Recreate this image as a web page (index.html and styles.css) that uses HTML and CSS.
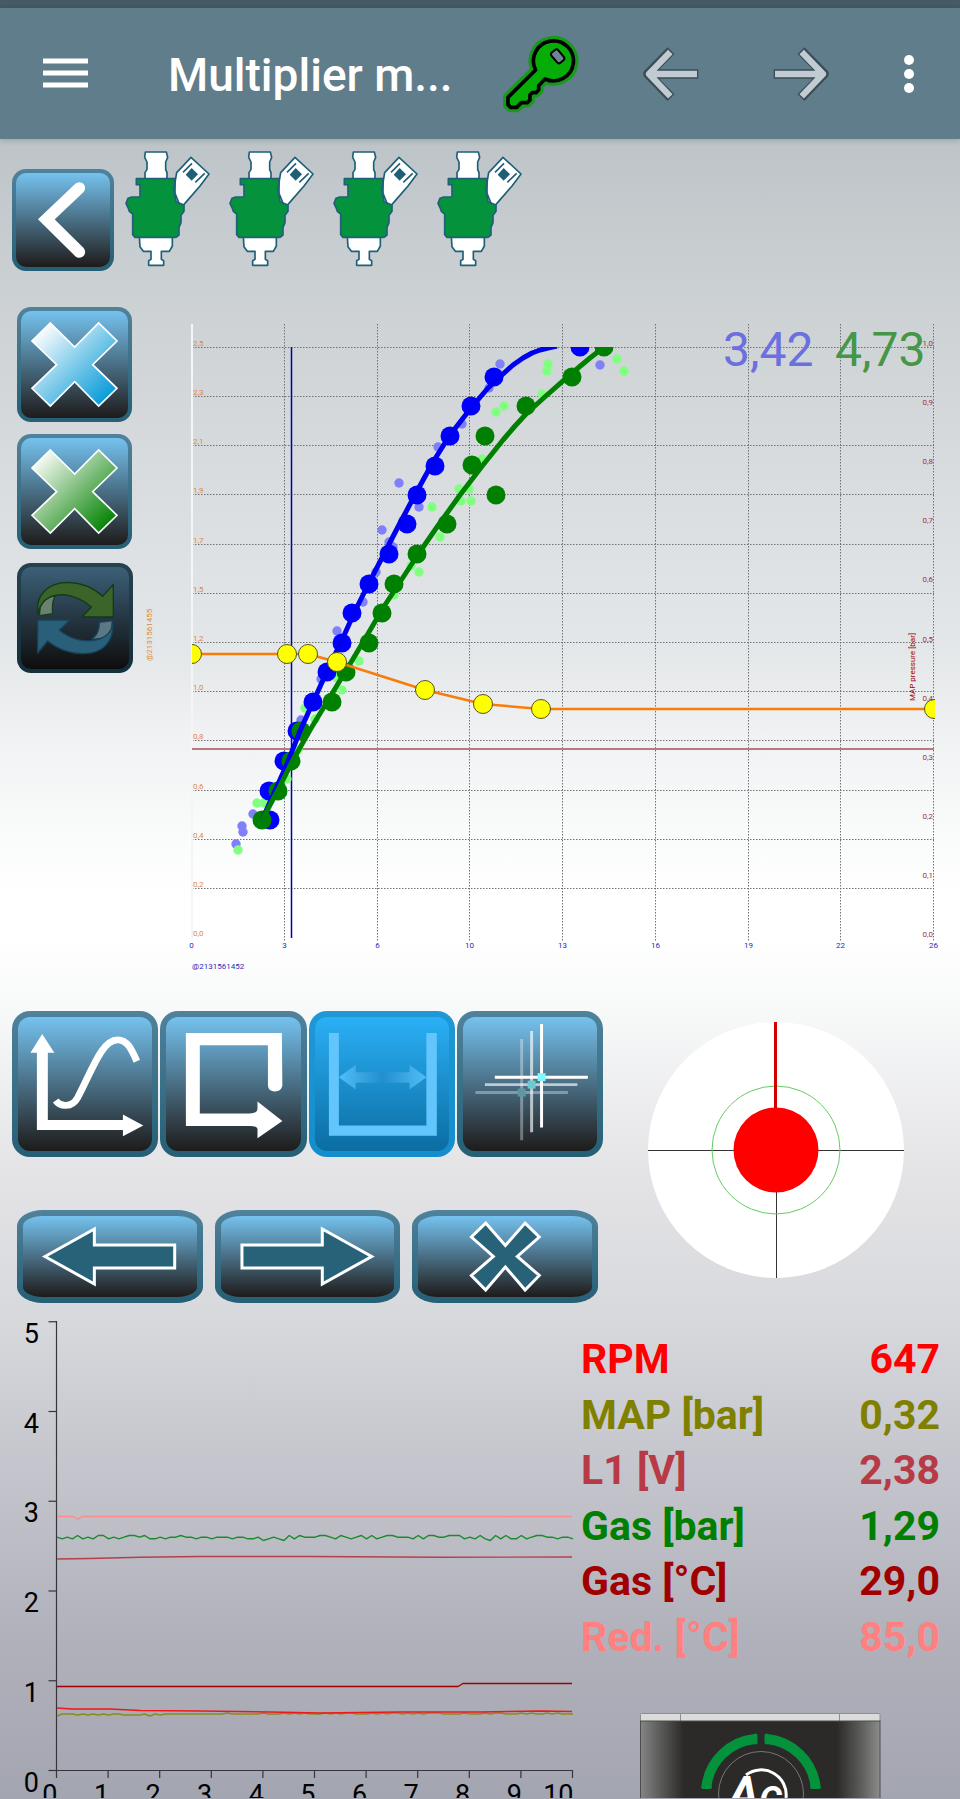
FILE: index.html
```html
<!DOCTYPE html>
<html lang="en">
<head>
<meta charset="utf-8">
<meta name="viewport" content="width=device-width, initial-scale=1">
<title>Multiplier map</title>
<link rel="stylesheet" href="styles.css">
</head>
<body>
<div class="status-bar"></div>
<header class="app-bar">
  <button class="bar-btn menu" aria-label="Menu">
    <svg viewBox="0 0 45 32" width="45" height="32"><path d="M0 3H45M0 15H45M0 27H45" stroke="#fff" stroke-width="5"/></svg>
  </button>
  <h1 class="title">Multiplier m...</h1>
  <button class="bar-btn key" aria-label="Key">
    <svg viewBox="30 40 240 240" width="80" height="80">
      <g stroke-linejoin="round">
        <path d="M137 148L54 230V252L62 260H80L94 246H112L120 238V222L127 216H138L146 208V195L165 175A60 60 0 1 0 137 148Z" fill="none" stroke="#179a1c" stroke-width="30"/>
        <path d="M137 148L54 230V252L62 260H80L94 246H112L120 238V222L127 216H138L146 208V195L165 175A60 60 0 1 0 137 148Z" fill="#06ad06" stroke="#000" stroke-width="11"/>
        <rect x="190" y="87" width="26" height="40" rx="7" transform="rotate(-40 203 107)" fill="#6f8594" stroke="#000" stroke-width="6"/>
      </g>
    </svg>
  </button>
  <button class="bar-btn prev" aria-label="Previous">
    <svg viewBox="450 70 189 180" width="63" height="60">
      <g fill="none" stroke-linejoin="round">
        <path d="M543 90L474 160L543 231M625 160H487" stroke="#3b4c57" stroke-width="29"/>
        <path d="M541 94L477 160L541 227M621 160H487" stroke="#c0cbd2" stroke-width="19"/>
      </g>
    </svg>
  </button>
  <button class="bar-btn next" aria-label="Next">
    <svg viewBox="839 70 189 180" width="63" height="60">
      <g fill="none" stroke-linejoin="round">
        <path d="M932 90L1001 160L932 231M850 160H988" stroke="#3b4c57" stroke-width="29"/>
        <path d="M934 94L998 160L934 227M854 160H988" stroke="#c0cbd2" stroke-width="19"/>
      </g>
    </svg>
  </button>
  <button class="bar-btn more" aria-label="More options">
    <svg viewBox="0 0 20 40" width="20" height="40" fill="#fff"><circle cx="10" cy="6" r="5"/><circle cx="10" cy="20" r="5"/><circle cx="10" cy="34" r="5"/></svg>
  </button>
</header>

<main>
  <svg class="defs" width="0" height="0" aria-hidden="true">
    <defs>
      <linearGradient id="blue" x1="0" y1="0" x2="1" y2="1"><stop offset=".12" stop-color="#f4fafd"/><stop offset=".5" stop-color="#7fcbea"/><stop offset=".9" stop-color="#089bd8"/></linearGradient>
      <linearGradient id="green" x1="0" y1="0" x2="1" y2="1"><stop offset=".12" stop-color="#f0f7ee"/><stop offset=".5" stop-color="#7dbd7b"/><stop offset=".9" stop-color="#048404"/></linearGradient>
      <symbol id="injector" viewBox="372 27 264 354">
        <g stroke="#1f6078" stroke-width="5" stroke-linejoin="round" fill="#fff">
          <path d="M573 52L627 102L600 138L560 184L548 198L538 192L525 160V128L530 98Z"/>
          <path d="M436 36H499L503 52L497 66V88L501 98V118H435V98L441 88V66L434 52Z"/>
          <path d="M418 290H517V318L508 334H484V358L491 362V376H446V362L453 358V334H430L420 320Z"/>
          <path fill="#04923c" d="M409 116H525V132L522 150L528 185L552 195V214L543 226V248L537 262V285L528 292H405L398 284V222L388 214L385 205L378 190L384 175L395 171H420V134H409Z"/>
          <path d="M575 84L594 103L575 122L557 104Z" fill="#1f6078" stroke="none"/>
          <path d="M549 97L576 70M586 127L614 100" fill="none"/>
        </g>
      </symbol>
    </defs>
  </svg>

  <section class="injectors">
    <button class="tile back" aria-label="Back">
      <svg viewBox="48 98 282 282"><path d="M238 143L139 237L238 335" fill="none" stroke="#fff" stroke-width="35" stroke-linecap="round"/></svg>
    </button>
    <div class="injector-list">
      <svg><use href="#injector"/></svg>
      <svg><use href="#injector"/></svg>
      <svg><use href="#injector"/></svg>
      <svg><use href="#injector"/></svg>
    </div>
  </section>

  <section class="map">
    <div class="side">
      <button class="tile square" aria-label="Clear petrol points">
        <svg viewBox="63 64 321 321"><path d="M151 100L224 172L296 100L351 154L278 225L351 296L296 349L224 276L151 349L96 296L170 225L96 154Z" fill="url(#blue)" stroke="#fff" stroke-width="5"/></svg>
      </button>
      <button class="tile square" aria-label="Clear gas points">
        <svg viewBox="63 64 321 321"><path d="M151 100L224 172L296 100L351 154L278 225L351 296L296 349L224 276L151 349L96 296L170 225L96 154Z" fill="url(#green)" stroke="#fff" stroke-width="5"/></svg>
      </button>
      <button class="tile refresh" aria-label="Refresh" disabled>
        <svg viewBox="63 832 324 306">
          <g stroke-width="4" stroke-linejoin="round">
            <path d="M118 978L121 950C128 930 142 922 165 918C156 938 156 955 158 972Z" fill="#6d8173" stroke="#124018"/>
            <path d="M113 972C106 918 142 878 205 878C245 880 280 893 308 920L340 884V982H246L274 952C236 920 190 908 155 920C135 928 120 942 113 972Z" fill="#3b632a" stroke="#0d3d14"/>
            <path d="M337 993L334 1022C326 1040 305 1050 276 1048C294 1036 298 1018 298 998Z" fill="#5d7884" stroke="#17435a"/>
            <path d="M339 1004C340 1055 310 1092 250 1092C205 1092 170 1076 143 1054L113 1090V991H210L178 1022C215 1052 260 1060 300 1048C320 1040 333 1026 339 1004Z" fill="#295f78" stroke="#17435a"/>
          </g>
        </svg>
      </button>
    </div>
    <svg class="map-chart" id="map-chart" viewBox="140 307 820 683" role="img" aria-label="Injection time against pressure">
      <defs><clipPath id="plot"><rect x="192" y="347" width="743" height="592"/></clipPath></defs>
      <g id="map-grid"></g>
      <path d="M192 324V940" stroke="#f3f5f6" stroke-width="2"/>
      <g class="big"><text x="723" y="366" fill="#6b6fe0">3,42</text><text x="835" y="366" fill="#469648">4,73</text></g>
      <path d="M192 749H934" stroke="#b9797d" stroke-width="2"/>
      <path d="M291.500 347V938" stroke="#0000a8" stroke-width="1.500"/>
      <g id="map-data" clip-path="url(#plot)"></g>
      <g id="map-labels" class="tiny"></g>
      <g class="tiny">
        <text transform="translate(152 661) rotate(-90)" fill="#dd8a40">@2131561455</text>
        <text transform="translate(915 701) rotate(-90)" fill="#a00000">MAP pressure [bar]</text>
        <text x="192" y="969" fill="#2c2cb4">@2131561452</text>
      </g>
    </svg>
  </section>

  <section class="controls">
    <div class="control-pads">
      <div class="modes">
        <button class="tile thick" aria-label="Curve">
          <svg viewBox="18 1017 135 135">
            <path d="M42.300 1034L54.600 1053H48V1120.700H123.500V1115L144 1126L123.500 1137V1130.700H37V1053H30.500Z" fill="#fff"/>
            <path d="M56 1101C60 1107 72 1109 78 1098C92 1072 102 1040 118 1040C128 1040 132 1049 137.500 1061.500" fill="none" stroke="#fff" stroke-width="7"/>
          </svg>
        </button>
        <button class="tile thick" aria-label="Frame">
          <svg viewBox="166 1017 135 135"><path d="M186 1033H282.500L283 1086Q282 1092 275.500 1092T268.500 1086V1045.500H200V1114H250Q258 1114 258 1109V1102L283 1121.500L258 1139V1130Q258 1126.500 250 1126.500H186Z" fill="#fff"/></svg>
        </button>
        <button class="tile thick active" aria-label="Range" aria-pressed="true">
          <svg viewBox="314 1017 135 135">
            <defs><linearGradient id="span"><stop offset="0" stop-color="#52bdf8"/><stop offset=".5" stop-color="#218fcd"/><stop offset="1" stop-color="#52bdf8"/></linearGradient></defs>
            <path d="M328 1033H338V1126H426V1033H436.500V1136.500H328Z" fill="#62c6fc"/>
            <path d="M338 1077.500L355 1065V1072.500H409V1065L426 1077.500L409 1090V1083H355V1090Z" fill="url(#span)"/>
          </svg>
        </button>
        <button class="tile thick" aria-label="Cursor">
          <svg viewBox="462 1017 135 135">
            <g fill="none" stroke="#fff" stroke-width="3">
              <path d="M521 1039V1141M474.500 1093H567.500" opacity=".35"/>
              <path d="M531 1031V1133M484 1085H577" opacity=".65"/>
              <path d="M541 1024V1128M494 1077.500H587.500"/>
            </g>
            <path d="M517 1089H525V1097H517Z" fill="#5a98a2"/><path d="M527 1081H535V1089H527Z" fill="#6ccad2"/><path d="M537 1073.500H545V1081.500H537Z" fill="#7ff8ff"/>
          </svg>
        </button>
      </div>
      <div class="nav">
        <button class="tile thick wide" aria-label="Move left">
          <svg viewBox="23 1217 174 81"><path d="M45 1257.500L94.500 1230V1246H175V1269H94.500V1285Z" fill="#276278" stroke="#fff" stroke-width="3"/></svg>
        </button>
        <button class="tile thick wide" aria-label="Move right">
          <svg viewBox="220 1217 174 81"><path d="M371 1257.500L321.500 1230V1246H241V1269H321.500V1285Z" fill="#276278" stroke="#fff" stroke-width="3"/></svg>
        </button>
        <button class="tile thick wide" aria-label="Delete">
          <svg viewBox="417 1217 174 81"><path d="M484.800 1224L504.500 1246.500L524.300 1224L538.500 1238L516.500 1257.500L538.500 1276.500L524.300 1291L504.500 1268L484.800 1291L470.500 1276.500L492.500 1257.500L470.500 1238Z" fill="#276278" stroke="#fff" stroke-width="3"/></svg>
        </button>
      </div>
    </div>
    <div class="target-cell">
      <svg class="target" viewBox="0 0 256 256" role="img" aria-label="Target">
        <circle cx="128" cy="128" r="128" fill="#fff"/>
        <path d="M0 128.500H256M128.500 128V256" stroke="#333" stroke-width="1"/>
        <circle cx="128" cy="128" r="64" fill="none" stroke="#62cc62"/>
        <path d="M127.500 0V100" stroke="#d40000" stroke-width="3"/>
        <circle cx="128" cy="128" r="42.500" fill="#f00"/>
      </svg>
    </div>
  </section>

  <section class="live">
    <svg class="trend" id="trend" viewBox="0 1310 575 489" role="img" aria-label="Live signals"></svg>
    <div class="readout">
      <table>
        <tbody>
          <tr class="rpm"><th scope="row">RPM</th><td>647</td></tr>
          <tr class="press"><th scope="row">MAP [bar]</th><td>0,32</td></tr>
          <tr class="lambda"><th scope="row">L1 [V]</th><td>2,38</td></tr>
          <tr class="gasbar"><th scope="row">Gas [bar]</th><td>1,29</td></tr>
          <tr class="gastemp"><th scope="row">Gas [°C]</th><td>29,0</td></tr>
          <tr class="red"><th scope="row">Red. [°C]</th><td>85,0</td></tr>
        </tbody>
      </table>
      <svg class="switch" viewBox="640 1714 241 85" role="img" aria-label="AC switch">
        <defs><linearGradient id="body"><stop offset="0" stop-color="#858585"/><stop offset=".08" stop-color="#5c5c5b"/><stop offset=".18" stop-color="#2b2a28"/><stop offset=".82" stop-color="#2b2a28"/><stop offset=".92" stop-color="#5c5c5b"/><stop offset="1" stop-color="#8c8c8c"/></linearGradient></defs>
        <rect x="640.500" y="1714.500" width="239.500" height="9" rx="1" fill="#d9dcda" stroke="#8d908f"/>
        <path d="M680.500 1714V1723M839.500 1714V1723" stroke="#8d908f"/>
        <rect x="640.500" y="1722" width="239.500" height="90" fill="url(#body)" stroke="#4d4d4d"/>
        <g fill="none" stroke-linejoin="round">
          <path d="M755 1740A54 54 0 0 0 706.500 1787" stroke="#04923c" stroke-width="10"/>
          <path d="M767 1740A54 54 0 0 1 815.500 1787" stroke="#04923c" stroke-width="10"/>
          <path d="M755.500 1736.500V1743.500M766.500 1736.500V1743.500M703 1788H710M812 1788H819" stroke="#04923c" stroke-width="4" stroke-linecap="round"/>
          <circle cx="761" cy="1795" r="42.500" stroke="#777"/>
          <path d="M746 1776A25 25 0 0 1 786 1799" stroke="#fff" stroke-width="3"/>
        </g>
        <g fill="#fff" class="logo"><text x="728" y="1811" font-size="48">A</text><text x="759" y="1813" font-size="36">C</text></g>
      </svg>
    </div>
  </section>
</main>
<script src="charts.js"></script>
</body>
</html>
```
FILE: styles.css
```css
* { box-sizing: border-box; }
html { height: 100%; }
body {
  margin: 0;
  min-height: 100%;
  overflow-x: hidden;
  font-family: Roboto, "Liberation Sans", sans-serif;
  background: linear-gradient(#bcc3c6 7%, #cbd0d3 16%, #e4e7e9 36%, #f0f2f3 41%, #fafbfb 46.500%, #fff 50%, #fff 52%, #f8f9f9 56%, #e4e4e7 65%, #d8d9dd 73%, #c0c1c9 83.500%, #b1b1bb 91%, #a3a5b0 100%);
}
svg { display: block; }
button { padding: 0; margin: 0; font: inherit; }
.defs { position: absolute; }

.status-bar { height: 8px; background: #465a66; }
.app-bar {
  position: relative;
  display: flex;
  align-items: center;
  height: 131px;
  padding: 0 41px 0 43px;
  background: #607d8b;
  box-shadow: 0 1px 6px rgba(0, 0, 0, .2);
}
.bar-btn { flex: none; background: none; border: 0; }
.title {
  flex: 1;
  min-width: 0;
  margin: 2px 0 0 80px;
  font-size: 46px;
  font-weight: 500;
  line-height: 56px;
  color: #fff;
  white-space: nowrap;
  overflow: hidden;
}
.prev { margin-left: 60px; }
.next { margin-left: 67px; }
.more { margin-left: 66px; }

.tile {
  display: block;
  border: 4px solid transparent;
  border-radius: 14px;
  background: linear-gradient(#75c2ef, #1e1b1a) padding-box, linear-gradient(#50829b, #255f75) border-box;
}
.tile svg { width: 100%; height: 100%; }
.thick { border-width: 6px; border-radius: 18px; }
.wide { border-radius: 26px / 16px; }
.active { background: linear-gradient(#2bb0f6, #0b6da2) padding-box, linear-gradient(#1f98d6, #148dcd) border-box; }

.injectors { display: flex; gap: 10px; padding: 10px 12px 0; }
.back { width: 102px; height: 102px; margin-top: 20px; }
.injector-list { display: flex; gap: 16px; }
.injector-list svg { width: 88px; height: 118px; }

.map { display: flex; margin-top: 36px; padding-left: 17px; }
.side { flex: none; width: 123px; }
.square { width: 115px; height: 115px; margin-bottom: 12px; }
.refresh {
  width: 116px;
  height: 110px;
  margin-top: 14px;
  background: linear-gradient(#3c6078, #0e0d0d) padding-box, linear-gradient(#28414e, #122f3b) border-box;
}
.map-chart { flex: 1; min-width: 0; }
.tiny { font-size: 8px; }
.big { font-size: 48px; }

.controls { display: grid; grid-template-columns: 603fr 357fr; margin-top: 21px; }
.modes { display: grid; grid-template-columns: repeat(4, 1fr); gap: 2px; padding-left: 12px; }
.modes .tile { aspect-ratio: 1; }
.nav { display: grid; grid-template-columns: repeat(3, 1fr); gap: 12px; margin-top: 53px; padding: 0 5px 0 17px; }
.nav .tile { height: 93px; }
.target-cell { padding: 11px 56px 0 45px; }
.target { width: 100%; }

.live { display: grid; grid-template-columns: 575fr 385fr; margin-top: 6px; }
.trend { width: 100%; font-size: 27px; }
.readout { padding: 22px 20px 0 6px; }
.readout table { width: 100%; height: 333px; border-collapse: collapse; font-size: 41px; line-height: 48px; }
.readout th, .readout td { padding: 0; font-weight: 700; text-align: left; white-space: nowrap; }
.readout td { text-align: right; }
.rpm { color: #f00; }
.press { color: #808000; }
.lambda { color: #b83a46; }
.gasbar { color: #008000; }
.gastemp { color: #a00000; }
.red { color: #ff8080; }
.switch { width: 241px; margin: 49px 0 0 59px; }
.logo { font-weight: 700; font-style: italic; }
```
FILE: charts.js
```js
const NS = "http://www.w3.org/2000/svg";
function add(parent, tag, attrs, text) {
  const el = document.createElementNS(NS, tag);
  for (const k in attrs) el.setAttribute(k, attrs[k]);
  if (text !== undefined) el.textContent = text;
  parent.appendChild(el);
  return el;
}
const byId = id => document.getElementById(id);

/* Map chart */
const grid = byId("map-grid");
const labels = byId("map-labels");
const dotted = { stroke: "#6f7375", "stroke-width": 1, "stroke-dasharray": "1.5 1.5" };
["0", "3", "6", "10", "13", "16", "19", "22", "26"].forEach((t, i) => {
  const x = Math.round(192 + i * 92.75) - 0.5;
  if (i) add(grid, "path", { d: `M${x} 324V941`, ...dotted });
  add(labels, "text", { x, y: 948, fill: "#2c2cb4", "text-anchor": "middle" }, t);
});
["2,5", "2,3", "2,1", "1,9", "1,7", "1,5", "1,2", "1,0", "0,8", "0,6", "0,4", "0,2", "0,0"].forEach((t, i) => {
  const y = Math.round(346.8 + i * 49.2) + 0.5;
  if (i < 12) add(grid, "path", { d: `M192 ${y}H934`, ...dotted });
  add(labels, "text", { x: 193, y: y - 2, fill: "#dd8a40" }, t);
});
for (let i = 0; i <= 10; i++) {
  const t = ((10 - i) / 10).toFixed(1).replace(".", ",");
  add(labels, "text", { x: 933, y: 346 + i * 59.1, fill: "#a83232", "text-anchor": "end" }, t);
}

const data = byId("map-data");
function dots(points, r, fill, extra) {
  points.forEach(([cx, cy]) => add(data, "circle", { cx, cy, r, fill, ...extra }));
}
function line(parent, points, stroke, width) {
  add(parent, "polyline", { points: points.join(" "), fill: "none", stroke, "stroke-width": width, "stroke-linejoin": "round" });
}
dots([[600,365],[500,364],[489,388],[462,424],[438,447],[399,483],[419,507],[382,530],[389,542],[393,547],[376,572],[363,602],[337,631],[321,679],[301,720],[253,814],[242,826],[243,832],[236,844]], 4.7, "#8080f8");
dots([[617,359],[624,371],[548,364],[547,371],[542,394],[504,406],[496,412],[482,459],[459,489],[469,489],[461,501],[471,501],[432,507],[440,537],[411,566],[419,572],[394,595],[359,661],[342,690],[337,678],[305,708],[315,719],[298,750],[287,779],[257,803],[264,803],[238,850]], 4.7, "#80ff80");
dots([[580,347],[494,377],[471,406],[450,436],[435,466],[417,495],[407,524],[389,554],[369,584],[352,613],[342,643],[327,672],[313,702],[297,731],[284,761],[269,791],[270,820]], 9.5, "#00f");
dots([[604,347],[572,377],[526,406],[485,436],[472,465],[496,495],[447,524],[417,554],[394,584],[382,613],[369,643],[346,672],[332,702],[301,731],[291,761],[278,791],[262,820]], 9.5, "#008000");
line(data, [[262,820],[274,793],[287,764],[300,731],[314,700],[328,669],[342,640],[355,611],[369,583],[385,552],[400,523],[416,493],[433,462],[450,435],[471,408],[488,388],[503,374],[513,365],[523,358],[532,353],[540,350],[548,348],[557,346]], "#0000f0", 5);
line(data, [[262,820],[278,790],[293,760],[310,730],[330,697],[350,664],[369,632],[383,608],[400,582],[417,556],[437,527],[460,495],[483,465],[503,440],[515,426],[527,413],[547,395],[572,373],[590,358],[604,347]], "#008000", 5);
const map = [[192,654],[287,654],[308,654],[337,662],[425,690],[483,704],[541,709],[934,709]];
line(data, map, "#f87c08", 2.5);
dots(map, 9.5, "#ffff00", { stroke: "#55551a", "stroke-width": 1 });

/* Live trend */
const trend = byId("trend");
const axis = { stroke: "#35353a", "stroke-width": 1.2, fill: "none" };
add(trend, "path", { d: "M56.500 1322V1771.500H573", ...axis });
for (let i = 0; i <= 5; i++) {
  const y = 1771.500 - i * 89.75;
  add(trend, "path", { d: `M48.500 ${y}H57`, ...axis });
  add(trend, "text", { x: 39, y: y + 21, "text-anchor": "end" }, i);
}
for (let i = 0; i <= 10; i++) {
  const x = 56.500 + i * 51.6;
  add(trend, "path", { d: `M${x} 1771V1779`, ...axis });
  add(trend, "text", { x: x + 1, y: 1805, "text-anchor": "end" }, i);
}
/* One level per sample, 0.1 s apart */
const samples = (base, step, digits) =>
  [...digits].slice(0, 101).map((d, i) => [(57 + i * 5.16).toFixed(1), (base + d * step).toFixed(1)]);
line(trend, samples(1536.5, 1.65, "12120212002121001022121101121121112112213212302011100120121020210011120200110002120230202202100112112"), "#1c8a2c", 1.4);
line(trend, [[57,1517.5],[73,1517.5],[78,1520.5],[82,1517.5],[572,1517.5]], "#ff8a8a", 1.4);
line(trend, [[57,1560],[90,1559.5],[140,1558.3],[200,1557.5],[310,1557.5],[440,1558.2],[572,1558]], "#b5404c", 1.4);
line(trend, [[57,1687.5],[458,1687.5],[463,1684.5],[572,1684.5]], "#a00000", 1.4);
line(trend, samples(1714, 1, "31112121212112222131211111111111101111110111010101110101001110101001010100011110111010011101011010111"), "#8a8a20", 1.5);
line(trend, [[57,1709],[72,1710],[110,1710],[140,1711.5],[200,1712],[270,1713],[320,1714],[400,1713],[480,1713],[540,1712],[572,1712.5]], "#ee1818", 1.4);
```
